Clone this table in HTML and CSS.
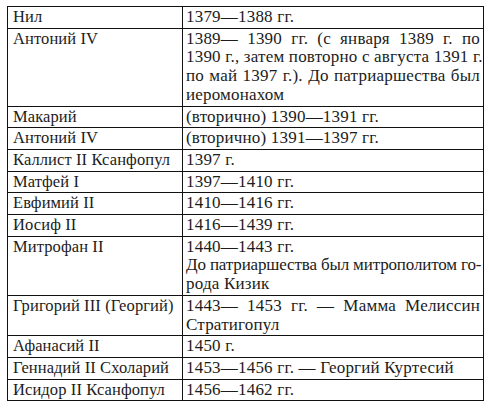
FILE: index.html
```html
<!DOCTYPE html>
<html lang="ru">
<head>
<meta charset="utf-8">
<link rel="stylesheet" href="styles.css">
</head>
<body>
<table class="tbl">
  <colgroup><col class="c1"><col class="c2"></colgroup>
  <tr><td>Нил</td><td>1379—1388 гг.</td></tr>
  <tr><td>Антоний IV</td><td><span class="jl">1389— 1390 гг. (с января 1389 г. по</span><span class="jl">1390 г., затем повторно с августа 1391 г.</span><span class="jl">по май 1397 г.). До патриаршества был</span><span class="ln">иеромонахом</span></td></tr>
  <tr><td>Макарий</td><td>(вторично) 1390—1391 гг.</td></tr>
  <tr><td>Антоний IV</td><td>(вторично) 1391—1397 гг.</td></tr>
  <tr><td>Каллист II Ксанфопул</td><td>1397 г.</td></tr>
  <tr><td>Матфей I</td><td>1397—1410 гг.</td></tr>
  <tr><td>Евфимий II</td><td>1410—1416 гг.</td></tr>
  <tr><td>Иосиф II</td><td>1416—1439 гг.</td></tr>
  <tr><td>Митрофан II</td><td><span class="ln">1440—1443 гг.</span><span class="jl tight">До патриаршества был митрополитом го-</span><span class="ln">рода Кизик</span></td></tr>
  <tr><td>Григорий III (Георгий)</td><td><span class="jl">1443— 1453 гг. — Мамма Мелиссин</span><span class="ln">Стратигопул</span></td></tr>
  <tr><td>Афанасий II</td><td>1450 г.</td></tr>
  <tr><td>Геннадий II Схоларий</td><td>1453—1456 гг. — Георгий Куртесий</td></tr>
  <tr><td>Исидор II Ксанфопул</td><td>1456—1462 гг.</td></tr>
</table>
</body>
</html>
```
FILE: styles.css
```css
html, body {
  margin: 0;
  background: #ffffff;
}
body {
  padding: 6px 0 0 7px;
  font-family: "Liberation Serif", "Times New Roman", serif;
  font-size: 17px;
  color: #1c1c1c;
}
.tbl {
  border-collapse: collapse;
  table-layout: fixed;
  width: 476px;
  border: 1.5px solid #111;
}
.c1 { width: 175px; }
.c2 { width: 301px; }
.tbl td {
  border: 1px solid #111;
  padding: 1px 3px 1px 5px;
  line-height: 18.7px;
  vertical-align: top;
  white-space: nowrap;
  font-size: 16.5px;
  letter-spacing: 0.1px;
}
.tbl td + td {
  padding-left: 3px;
  font-size: 17px;
  letter-spacing: 0.2px;
}
.jl {
  display: block;
  text-align: justify;
  text-align-last: justify;
}
.tbl td .tight {
  letter-spacing: -0.15px;
}
.ln {
  display: block;
}
```
